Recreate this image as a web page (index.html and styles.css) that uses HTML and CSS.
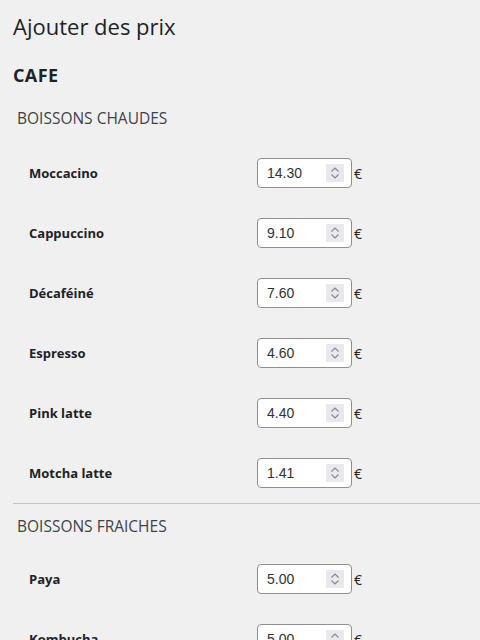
FILE: index.html
```html
<!DOCTYPE html>
<html lang="fr">
<head>
<meta charset="utf-8">
<link rel="stylesheet" href="styles.css">
</head>
<body>
<div class="wrap">
  <h1 class="title">Ajouter des prix</h1>
  <h2 class="cat">CAFE</h2>
  <section class="group">
    <h3 class="sub">BOISSONS CHAUDES</h3>
    <div class="rows">
      <div class="row"><span class="label">Moccacino</span><span class="field"><span class="box"><input class="num" type="number" step="0.01" value="14.30"><span class="spin"><svg viewBox="0 0 18 18" width="18" height="18"><path d="M5.5 7.5 L9 4 L12.5 7.5 M5.5 10.5 L9 14 L12.5 10.5" fill="none" stroke="#8a8a8e" stroke-width="1.2"/></svg></span></span><span class="cur">€</span></span></div>
      <div class="row"><span class="label">Cappuccino</span><span class="field"><span class="box"><input class="num" type="number" step="0.01" value="9.10"><span class="spin"><svg viewBox="0 0 18 18" width="18" height="18"><path d="M5.5 7.5 L9 4 L12.5 7.5 M5.5 10.5 L9 14 L12.5 10.5" fill="none" stroke="#8a8a8e" stroke-width="1.2"/></svg></span></span><span class="cur">€</span></span></div>
      <div class="row"><span class="label">Décaféiné</span><span class="field"><span class="box"><input class="num" type="number" step="0.01" value="7.60"><span class="spin"><svg viewBox="0 0 18 18" width="18" height="18"><path d="M5.5 7.5 L9 4 L12.5 7.5 M5.5 10.5 L9 14 L12.5 10.5" fill="none" stroke="#8a8a8e" stroke-width="1.2"/></svg></span></span><span class="cur">€</span></span></div>
      <div class="row"><span class="label">Espresso</span><span class="field"><span class="box"><input class="num" type="number" step="0.01" value="4.60"><span class="spin"><svg viewBox="0 0 18 18" width="18" height="18"><path d="M5.5 7.5 L9 4 L12.5 7.5 M5.5 10.5 L9 14 L12.5 10.5" fill="none" stroke="#8a8a8e" stroke-width="1.2"/></svg></span></span><span class="cur">€</span></span></div>
      <div class="row"><span class="label">Pink latte</span><span class="field"><span class="box"><input class="num" type="number" step="0.01" value="4.40"><span class="spin"><svg viewBox="0 0 18 18" width="18" height="18"><path d="M5.5 7.5 L9 4 L12.5 7.5 M5.5 10.5 L9 14 L12.5 10.5" fill="none" stroke="#8a8a8e" stroke-width="1.2"/></svg></span></span><span class="cur">€</span></span></div>
      <div class="row"><span class="label">Motcha latte</span><span class="field"><span class="box"><input class="num" type="number" step="0.01" value="1.41"><span class="spin"><svg viewBox="0 0 18 18" width="18" height="18"><path d="M5.5 7.5 L9 4 L12.5 7.5 M5.5 10.5 L9 14 L12.5 10.5" fill="none" stroke="#8a8a8e" stroke-width="1.2"/></svg></span></span><span class="cur">€</span></span></div>
    </div>
  </section>
  <hr class="sep">
  <section class="group group-next">
    <h3 class="sub">BOISSONS FRAICHES</h3>
    <div class="rows">
      <div class="row"><span class="label">Paya</span><span class="field"><span class="box"><input class="num" type="number" step="0.01" value="5.00"><span class="spin"><svg viewBox="0 0 18 18" width="18" height="18"><path d="M5.5 7.5 L9 4 L12.5 7.5 M5.5 10.5 L9 14 L12.5 10.5" fill="none" stroke="#8a8a8e" stroke-width="1.2"/></svg></span></span><span class="cur">€</span></span></div>
      <div class="row"><span class="label">Kombucha</span><span class="field"><span class="box"><input class="num" type="number" step="0.01" value="5.00"><span class="spin"><svg viewBox="0 0 18 18" width="18" height="18"><path d="M5.5 7.5 L9 4 L12.5 7.5 M5.5 10.5 L9 14 L12.5 10.5" fill="none" stroke="#8a8a8e" stroke-width="1.2"/></svg></span></span><span class="cur">€</span></span></div>
    </div>
  </section>
</div>
</body>
</html>
```
FILE: styles.css
```css
html, body {
  margin: 0;
  padding: 0;
  background: #f0f0f1;
}
body {
  font-family: "Open Sans", "Noto Sans", sans-serif;
  color: #1d2327;
  overflow: hidden;
}
.wrap {
  padding: 0 0 0 13px;
}
.title {
  margin: 0;
  padding-top: 11px;
  font-size: 22px;
  font-weight: 400;
  line-height: 30px;
  color: #1d2327;
}
.cat {
  margin: 22px 0 0 0;
  font-size: 18px;
  font-weight: 700;
  letter-spacing: 0.4px;
  line-height: 24px;
  color: #1d2327;
}
.sub {
  margin: 20px 0 0 4px;
  font-size: 15.5px;
  font-weight: 400;
  line-height: 22px;
  color: #3c434a;
}
.group-next .sub {
  margin-top: 11px;
}
.rows {
  display: flex;
  flex-direction: column;
  margin-top: 14px;
}
.group-next .rows {
  margin-top: 12px;
}
.row {
  display: flex;
  align-items: center;
  height: 60px;
}
.label {
  width: 228px;
  padding-left: 16px;
  font-size: 13px;
  font-weight: 700;
  color: #1d2327;
}
.field {
  display: flex;
  align-items: center;
  gap: 2px;
}
.box {
  position: relative;
  display: block;
  width: 95px;
  height: 30px;
}
.num {
  box-sizing: border-box;
  width: 95px;
  height: 30px;
  margin: 0;
  padding: 0 6px 0 9px;
  border: 1px solid #8c8f94;
  border-radius: 4px;
  background: #fff;
  font-family: "Liberation Sans", Arial, sans-serif;
  font-size: 14px;
  color: #2c3338;
  -moz-appearance: textfield;
  appearance: textfield;
}
.num::-webkit-inner-spin-button,
.num::-webkit-outer-spin-button {
  -webkit-appearance: none;
  margin: 0;
}
.spin {
  position: absolute;
  top: 6px;
  right: 8px;
  width: 18px;
  height: 18px;
  background: #e9e9ed;
  display: block;
}
.spin svg {
  display: block;
}
.cur {
  font-size: 14px;
  color: #1d2327;
}
.sep {
  margin: 0;
  border: 0;
  border-top: 1px solid #c3c4c7;
}
```
